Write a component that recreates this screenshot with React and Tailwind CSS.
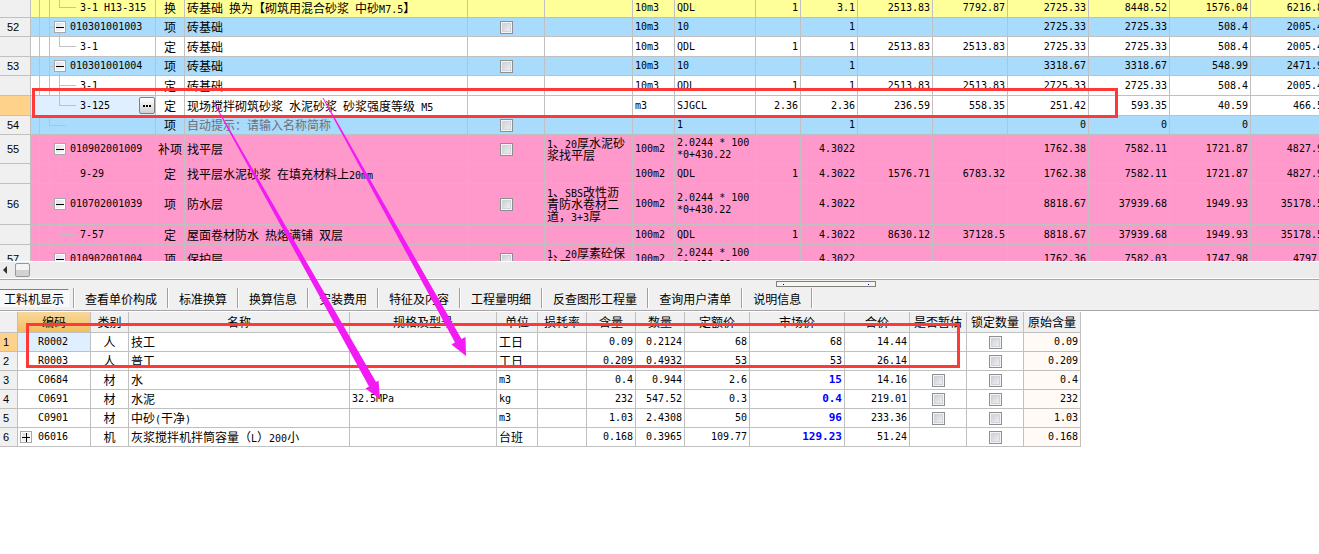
import React from "react";
import { useState } from "react";

const quotaRows = [
  { no: "", code: "3-1 H13-315", kind: "last", type: "换", name: "砖基础 换为【砌筑用混合砂浆 中砂M7.5】", unit: "10m3", expr: "QDL", nums: ["1", "3.1", "2513.83", "7792.87", "2725.33", "8448.52", "1576.04", "6216.83"], color: "bg-[#ffff99]", h: "h-5" },
  { no: "52", code: "010301001003", kind: "parent", type: "项", name: "砖基础", check: true, unit: "10m3", expr: "10", nums: ["", "1", "", "", "2725.33", "2725.33", "508.4", "2005.41"], color: "bg-[#a8dbfc]", h: "h-[19px]" },
  { no: "", code: "3-1", kind: "last", type: "定", name: "砖基础", unit: "10m3", expr: "QDL", nums: ["1", "1", "2513.83", "2513.83", "2725.33", "2725.33", "508.4", "2005.41"], color: "bg-white", h: "h-5" },
  { no: "53", code: "010301001004", kind: "parent", type: "项", name: "砖基础", check: true, unit: "10m3", expr: "10", nums: ["", "1", "", "", "3318.67", "3318.67", "548.99", "2471.96"], color: "bg-[#a8dbfc]", h: "h-[19px]" },
  { no: "", code: "3-1", kind: "child", type: "定", name: "砖基础", unit: "10m3", expr: "QDL", nums: ["1", "1", "2513.83", "2513.83", "2725.33", "2725.33", "508.4", "2005.41"], color: "bg-white", h: "h-5" },
  { no: "", code: "3-125", kind: "last", selected: true, type: "定", name: "现场搅拌砌筑砂浆 水泥砂浆 砂浆强度等级 M5", unit: "m3", expr: "SJGCL", nums: ["2.36", "2.36", "236.59", "558.35", "251.42", "593.35", "40.59", "466.55"], color: "bg-white", h: "h-5" },
  { no: "54", code: "", kind: "empty", type: "项", name: "自动提示：请输入名称简称", hint: true, check: true, unit: "", expr: "1", nums: ["", "1", "", "", "0", "0", "0", ""], color: "bg-[#a8dbfc]", h: "h-[19px]" },
  { no: "55", code: "010902001009", kind: "parent", type: "补项", name: "找平层", check: true, feature: "1、20厚水泥砂\n浆找平层", unit: "100m2", expr: "2.0244 * 100\n*0+430.22", nums: ["", "4.3022", "", "", "1762.38", "7582.11", "1721.87", "4827.93"], color: "bg-[#ff99cc]", h: "h-[29px]" },
  { no: "", code: "9-29", kind: "last", type: "定", name: "找平层水泥砂浆 在填充材料上20mm", unit: "100m2", expr: "QDL", nums: ["1", "4.3022", "1576.71", "6783.32", "1762.38", "7582.11", "1721.87", "4827.93"], color: "bg-[#ff99cc]", h: "h-5" },
  { no: "56", code: "010702001039", kind: "parent", type: "项", name: "防水层", check: true, feature: "1、SBS改性沥\n青防水卷材二\n道，3+3厚", unit: "100m2", expr: "2.0244 * 100\n*0+430.22", nums: ["", "4.3022", "", "", "8818.67", "37939.68", "1949.93", "35178.52"], color: "bg-[#ff99cc]", h: "h-[41px]" },
  { no: "", code: "7-57", kind: "last", type: "定", name: "屋面卷材防水 热熔满铺 双层", unit: "100m2", expr: "QDL", nums: ["1", "4.3022", "8630.12", "37128.5", "8818.67", "37939.68", "1949.93", "35178.52"], color: "bg-[#ff99cc]", h: "h-5" },
  { no: "57", code: "010902001004", kind: "parent", type: "项", name: "保护层", check: true, feature: "1、20厚素砼保\n护层", unit: "100m2", expr: "2.0244 * 100\n*0+430.22", nums: ["", "4.3022", "", "", "1762.36", "7582.03", "1747.98", "4797.4"], color: "bg-[#ff99cc]", h: "h-[29px]" },
];

const tabs = ["工料机显示", "查看单价构成", "标准换算", "换算信息", "安装费用", "特征及内容", "工程量明细", "反查图形工程量", "查询用户清单", "说明信息"];

const resourceHead = ["编码", "类别", "名称", "规格及型号", "单位", "损耗率", "含量", "数量", "定额价", "市场价", "合价", "是否暂估", "锁定数量", "原始含量"];

const resources = [
  { code: "R0002", type: "人", name: "技工", spec: "", unit: "工日", qty: "0.09", amount: "0.2124", price: "68", market: "68", total: "14.44", origin: "0.09" },
  { code: "R0003", type: "人", name: "普工", spec: "", unit: "工日", qty: "0.209", amount: "0.4932", price: "53", market: "53", total: "26.14", origin: "0.209" },
  { code: "C0684", type: "材", name: "水", spec: "", unit: "m3", qty: "0.4", amount: "0.944", price: "2.6", market: "15", changed: true, total: "14.16", estimate: true, origin: "0.4" },
  { code: "C0691", type: "材", name: "水泥", spec: "32.5MPa", unit: "kg", qty: "232", amount: "547.52", price: "0.3", market: "0.4", changed: true, total: "219.01", estimate: true, origin: "232" },
  { code: "C0901", type: "材", name: "中砂(干净)", spec: "", unit: "m3", qty: "1.03", amount: "2.4308", price: "50", market: "96", changed: true, total: "233.36", estimate: true, origin: "1.03" },
  { code: "06016", type: "机", name: "灰浆搅拌机拌筒容量（L）200小", spec: "", unit: "台班", qty: "0.168", amount: "0.3965", price: "109.77", market: "129.23", changed: true, total: "51.24", expandable: true, origin: "0.168" },
];

// Latin runs use a monospaced face half as wide as the Chinese glyphs
const Txt = ({ children }) => {
  if (/^[\n\x20-\x7e]+$/.test(children)) {
    return <div className="font-['DejaVu_Sans_Mono',monospace] text-[10px] leading-3">{children}</div>;
  }
  return children.split(/([\x20-\x7e]+)/).map((part, i) =>
    i % 2 ? (
      <span key={i} className="font-['DejaVu_Sans_Mono',monospace] text-[10px] leading-[8px]">
        {part}
      </span>
    ) : (
      part
    )
  );
};

const Check = ({ label }) => (
  <input
    type="checkbox"
    aria-label={label}
    className="block mx-auto w-[13px] h-[13px] appearance-none border border-[#8e8f8f] bg-linear-to-br from-[#c6cad2] to-[#f6f6f6] shadow-[inset_0_0_0_1px_#f4f4f4,inset_0_0_0_2px_#d0d3d8] checked:bg-[#4b6fa8]"
  />
);

const Expander = ({ open, onClick }) => (
  <button
    onClick={onClick}
    aria-label={open ? "折叠" : "展开"}
    className="w-3 h-3 shrink-0 border border-[#a8a8a8] bg-linear-to-br from-[#d8dce4] to-white shadow-[inset_0_0_0_1px_#ffffff]"
  >
    <svg viewBox="0 0 10 10" className="block w-full h-full" shapeRendering="crispEdges">
      <path d={open ? "M1 5h8v1H1z" : "M1 5h8v1H1zM5 1h1v9H5z"} fill="#000" />
    </svg>
  </button>
);

const TreeLines = ({ kind, selected }) => (
  <svg className="absolute inset-0 w-full h-full" shapeRendering="crispEdges" stroke="#c0c0c0">
    {!selected && <line x1="8.5" x2="8.5" y1="0" y2="100%" />}
    {!selected && <line x1="18.5" x2="18.5" y1="0" y2={kind === "empty" ? "50%" : "100%"} />}
    {kind === "empty" && <line x1="18" x2="35" y1="50%" y2="50%" />}
    {kind === "parent" && <line x1="18" x2="24" y1="50%" y2="50%" />}
    {kind === "parent" && <line x1="28.5" x2="28.5" y1="50%" y2="100%" />}
    {(kind === "child" || kind === "last") && (
      <>
        <line x1="28.5" x2="28.5" y1="0" y2={kind === "last" ? "50%" : "100%"} />
        <line x1="28" x2="45" y1="50%" y2="50%" />
      </>
    )}
  </svg>
);

const QuotaRow = ({ row }) => {
  const [open, setOpen] = useState(true);
  const cell = "p-0 px-0.5 border-r border-b border-[#c0c0c0] whitespace-pre overflow-hidden";
  return (
    <tr className={`${row.h} ${row.color}`}>
      <th
        className={`p-0 pl-[7px] border-r border-b border-[#c0c0c0] text-left font-normal font-['Liberation_Sans',sans-serif] text-[11px] ${
          row.selected ? "bg-[#ffd28c]" : "bg-[#f0f0f0]"
        }`}
      >
        {row.no}
      </th>
      <td className={`p-0 relative border-r border-b border-[#c0c0c0] ${row.selected ? "bg-[#e0efff]" : ""}`}>
        <TreeLines kind={row.kind} selected={row.selected} />
        <div className={`relative flex items-center ${row.kind === "parent" ? "pl-[23px] gap-1" : "pl-[49px]"}`}>
          {row.kind === "parent" && <Expander open={open} onClick={() => setOpen(!open)} />}
          <span className="grow whitespace-pre">
            <Txt>{row.code}</Txt>
          </span>
          {row.selected && (
            <button
              aria-label="选择定额"
              className="w-4 h-[17px] flex items-center justify-center gap-px rounded-xs border border-[#808080] bg-linear-to-b from-white to-[#d0d0d0]"
            >
              <i className="w-0.5 h-0.5 bg-black" />
              <i className="w-0.5 h-0.5 bg-black" />
              <i className="w-0.5 h-0.5 bg-black" />
            </button>
          )}
        </div>
      </td>
      <td className={`${cell} text-center`}>{row.type}</td>
      <td className={`${cell} ${row.hint ? "text-[#707070]" : ""}`}>
        <Txt>{row.name}</Txt>
      </td>
      <td className={cell}>{row.check && <Check label={row.name} />}</td>
      <td className={cell}>
        <Txt>{row.feature || ""}</Txt>
      </td>
      <td className={cell}>
        <Txt>{row.unit}</Txt>
      </td>
      <td className={cell}>
        <Txt>{row.expr}</Txt>
      </td>
      {row.nums.map((n, i) => (
        <td key={i} className={`${cell} text-right`}>
          <Txt>{n}</Txt>
        </td>
      ))}
    </tr>
  );
};

const QuotaTable = () => (
  <div className="h-[261px] overflow-hidden">
    <table className="-mt-0.5 table-fixed w-[1332px] border-separate border-spacing-0">
      <colgroup>
        <col className="w-[31px]" />
        <col className="w-[125px]" />
        <col className="w-[29px]" />
        <col className="w-[283px]" />
        <col className="w-[77px]" />
        <col className="w-[88px]" />
        <col className="w-[42px]" />
        <col className="w-[81px]" />
        <col className="w-[45px]" />
        <col className="w-[57px]" />
        <col className="w-[75px]" />
        <col className="w-[75px]" />
        <col className="w-[81px]" />
        <col className="w-[81px]" />
        <col className="w-[81px]" />
        <col className="w-[81px]" />
      </colgroup>
      <tbody>
        {quotaRows.map((row, i) => (
          <QuotaRow key={i} row={row} />
        ))}
      </tbody>
    </table>
  </div>
);

const TabBar = () => {
  const [active, setActive] = useState(0);
  return (
    <div className="flex items-center h-5 mt-px mb-0.5">
      {tabs.map((tab, i) => (
        <div key={tab} className="flex items-center h-5">
          <button
            onClick={() => setActive(i)}
            className={`h-[18px] whitespace-nowrap border-t border-r ${i === 0 ? "pl-1 pr-1 mr-1" : "pl-2.5 pr-[9px]"} ${
              active === i ? "border-t-[#808080] border-r-white bg-[#f8f8f8]" : "border-transparent"
            }`}
          >
            {tab}
          </button>
          <div className="w-0.5 h-5 border-l border-[#a0a0a0] bg-white"></div>
        </div>
      ))}
    </div>
  );
};

const ResourceTable = () => {
  const cell = "p-0 px-0.5 border-r border-b border-[#c0c0c0] whitespace-pre overflow-hidden";
  return (
    <table className="table-fixed w-[1081px] border-separate border-spacing-0">
      <colgroup>
        <col className="w-[18px]" />
        <col className="w-[73px]" />
        <col className="w-[38px]" />
        <col className="w-[221px]" />
        <col className="w-[147px]" />
        <col className="w-[41px]" />
        <col className="w-[49px]" />
        <col className="w-[49px]" />
        <col className="w-[49px]" />
        <col className="w-[65px]" />
        <col className="w-[95px]" />
        <col className="w-[65px]" />
        <col className="w-[57px]" />
        <col className="w-[57px]" />
        <col className="w-[57px]" />
      </colgroup>
      <thead>
        <tr className="h-[21px] bg-[#f0f0f0]">
          <td className={cell}></td>
          {resourceHead.map((head, i) => (
            <th
              key={head}
              className={`${cell} font-normal text-center ${
                i === 0 ? "bg-linear-to-b from-[#f9d79c] to-[#f1bf5c]" : ""
              }`}
            >
              {head}
            </th>
          ))}
        </tr>
      </thead>
      <tbody>
        {resources.map((r, i) => (
          <tr key={r.code} className="h-[19px]">
            <th
              className={`p-0 pl-[3px] border-r border-b border-[#c0c0c0] text-left font-normal font-['Liberation_Sans',sans-serif] text-[11px] ${
                i === 0 ? "bg-[#ffd28c]" : "bg-[#f0f0f0]"
              }`}
            >
              {i + 1}
            </th>
            <td className={`${cell} ${i === 0 ? "bg-[#e0efff]" : ""}`}>
              <div className={`flex items-center ${r.expandable ? "gap-1.5" : "pl-[18px]"}`}>
                {r.expandable && <Expander />}
                <span>
                  <Txt>{r.code}</Txt>
                </span>
              </div>
            </td>
            <td className={`${cell} text-center`}>{r.type}</td>
            <td className={cell}><Txt>{r.name}</Txt></td>
            <td className={cell}><Txt>{r.spec}</Txt></td>
            <td className={cell}><Txt>{r.unit}</Txt></td>
            <td className={cell}></td>
            <td className={`${cell} text-right`}><Txt>{r.qty}</Txt></td>
            <td className={`${cell} text-right`}><Txt>{r.amount}</Txt></td>
            <td className={`${cell} text-right`}><Txt>{r.price}</Txt></td>
            <td className={`${cell} text-right ${r.changed ? "font-bold text-[#0000ff]" : ""}`}>
              {r.changed ? (
                <div className="font-['DejaVu_Sans_Mono',monospace] text-[11px] leading-3">{r.market}</div>
              ) : (
                <Txt>{r.market}</Txt>
              )}
            </td>
            <td className={`${cell} text-right`}><Txt>{r.total}</Txt></td>
            <td className={cell}>{r.estimate && <Check label={`${r.name} 是否暂估`} />}</td>
            <td className={cell}><Check label={`${r.name} 锁定数量`} /></td>
            <td className={`${cell} text-right bg-[#fffaf5]`}><Txt>{r.origin}</Txt></td>
          </tr>
        ))}
      </tbody>
    </table>
  );
};

// Red frames and arrows drawn over both tables
const Annotations = () => (
  <svg className="absolute inset-0 w-full h-full pointer-events-none">
    <g fill="none" stroke="#ff3838" strokeWidth="3">
      <rect x="33.5" y="89.5" width="1083" height="27" />
      <rect x="27.5" y="324.5" width="931" height="42" />
    </g>
    <g fill="#f31bf3">
      <path d="M213.5 103L214.5 103L376 382L378.5 380.5L380 399L365.5 388.5L369 386.5Z" />
      <path d="M322.5 98L323.5 98L461.5 339L465.5 337L466 356L451.5 344.5L455 342.5Z" />
    </g>
  </svg>
);

const App = () => {
  return (
    <div className="relative min-h-screen overflow-hidden bg-white text-black text-xs leading-3 font-['Noto_Sans_CJK_SC',sans-serif]">
      <QuotaTable />
      <div className="flex items-center h-[18px] border-y border-white bg-[#ececec]">
        <button aria-label="向左滚动" className="w-[15px] pr-1.5 flex justify-center">
          <svg width="4" height="8" viewBox="0 0 4 8">
            <path d="M4 0v8L0 4z" fill="#303030" />
          </svg>
        </button>
        <div className="w-[15px] h-3.5 rounded-xs border border-[#999999] bg-linear-to-b from-[#f4f4f4] from-50% to-[#d2d2d2] to-50%"></div>
      </div>
      <div className="border-t border-b border-[#a5a5ab] bg-[#f0f0f0]">
        <div className="flex pt-px">
          <div className="w-[59%] shrink-0"></div>
          <div className="w-[100px] h-1.5 px-1.5 flex items-center justify-between border border-[#808080] bg-[#f6f6f0] -ml-0.5">
            <i className="w-px h-px bg-[#000080]" />
            <i className="w-px h-px bg-[#000080]" />
          </div>
        </div>
        <TabBar />
      </div>
      <div className="pt-px">
        <ResourceTable />
      </div>
      <Annotations />
    </div>
  );
};

export default App;
